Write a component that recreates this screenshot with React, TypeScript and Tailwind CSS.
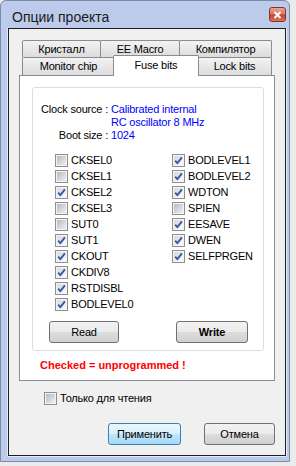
import type { ReactNode } from "react";

type Fuse = { name: string; checked: boolean };

const leftFuses: Fuse[] = [
  { name: "CKSEL0", checked: false },
  { name: "CKSEL1", checked: false },
  { name: "CKSEL2", checked: true },
  { name: "CKSEL3", checked: false },
  { name: "SUT0", checked: false },
  { name: "SUT1", checked: true },
  { name: "CKOUT", checked: true },
  { name: "CKDIV8", checked: true },
  { name: "RSTDISBL", checked: true },
  { name: "BODLEVEL0", checked: true },
];

const rightFuses: Fuse[] = [
  { name: "BODLEVEL1", checked: true },
  { name: "BODLEVEL2", checked: true },
  { name: "WDTON", checked: true },
  { name: "SPIEN", checked: false },
  { name: "EESAVE", checked: true },
  { name: "DWEN", checked: true },
  { name: "SELFPRGEN", checked: true },
];

const tabIdle =
  "flex items-center justify-center rounded-t-[2px] border-x border-t border-[#898c95] bg-[linear-gradient(to_bottom,#f3f3f3,#dcdcdc)]";

function CheckBox({ checked }: { checked: boolean }) {
  return (
    <span className="relative flex h-[13px] w-[13px] shrink-0 border border-[#8f8f8f] bg-[#f4f4f4] p-px">
      <span
        className={
          checked
            ? "h-full w-full bg-[linear-gradient(135deg,#d6d8dc,#fbfbfb)]"
            : "h-full w-full bg-[linear-gradient(135deg,#b7bac0,#efeff0)]"
        }
      />
      {checked && (
        <svg className="absolute left-0 top-0" width="11" height="11" viewBox="0 0 11 11">
          <path d="M2.2 5.6 L4.4 8.1 L8.9 2.4" fill="none" stroke="#3552a3" strokeWidth="1.8" />
        </svg>
      )}
    </span>
  );
}

function FuseRow({ fuse }: { fuse: Fuse }) {
  return (
    <div className="flex h-4 items-center gap-[3px]">
      <CheckBox checked={fuse.checked} />
      <span>{fuse.name}</span>
    </div>
  );
}

function Button({
  children,
  className = "",
  primary = false,
}: {
  children: ReactNode;
  className?: string;
  primary?: boolean;
}) {
  return (
    <button
      type="button"
      className={`flex h-[22px] items-center justify-center rounded-[3px] border ${
        primary
          ? "border-[#3c7fb1] bg-[linear-gradient(to_bottom,#eaf6fd_0%,#d9f0fc_50%,#bee6fd_50%,#a7d9f5_100%)]"
          : "border-[#707070] bg-[linear-gradient(to_bottom,#f2f2f2_0%,#ebebeb_50%,#dddddd_50%,#cfcfcf_100%)]"
      } ${className}`}
    >
      {children}
    </button>
  );
}

export default function App() {
  return (
    <div className="h-[466px] w-[296px] overflow-hidden bg-[#ebebeb] font-['Liberation_Sans',Arial,sans-serif] text-[11px] leading-[13px] tracking-[-0.2px] text-black">
      <div className="flex h-[462px] w-[290px] flex-col rounded-t-[6px] border border-[#7d8aa6] bg-[#bccaeb] pb-[5px] pl-[7px] pr-[3px]">
        {/* title bar */}
        <div className="-ml-[7px] -mr-[3px] flex h-[27px] shrink-0 items-start justify-between pl-[11px] pr-[3px] pt-[6px]">
          <span className="pt-[2px] text-[14px] leading-[16px] tracking-normal text-[#1b1b1b]">Опции проекта</span>
          <span className="flex h-[15px] w-[17px] items-center justify-center rounded-[3px] border border-[#8a3220] bg-[linear-gradient(to_bottom,#eaa596_0%,#d8765f_45%,#c4432a_55%,#d9765a_100%)]">
            <svg width="9" height="8" viewBox="0 0 9 8">
              <path d="M1.5 1 L7.5 7 M7.5 1 L1.5 7" stroke="#ffffff" strokeWidth="2" />
            </svg>
          </span>
        </div>

        {/* client area */}
        <div className="flex flex-1 flex-col border border-[#1e1e1e] bg-[#f0f0f0] shadow-[-1px_0_0_#e4eaf7,1px_0_0_#e4eaf7,0_1px_0_#e4eaf7]">
          <div className="ml-[10px] mt-[11px] w-[256px]">
            {/* tab rows */}
            <div className="flex h-[17px] pl-[3px]">
              <div className={`${tabIdle} h-[17px] w-[79px]`}>Кристалл</div>
              <div className={`${tabIdle} -ml-px h-[17px] w-[80px]`}>EE Macro</div>
              <div className={`${tabIdle} -ml-px h-[17px] w-[93px]`}>Компилятор</div>
            </div>
            <div className="flex h-[18px] items-end pl-[3px]">
              <div className={`${tabIdle} h-[18px] w-[93px]`}>Monitor chip</div>
              <div className="relative z-10 -mb-px -ml-[2px] flex h-[21px] w-[86px] items-start justify-center rounded-t-[2px] border-x border-t border-[#898c95] bg-white pt-[3px]">
                Fuse bits
              </div>
              <div className={`${tabIdle} -ml-[2px] h-[18px] w-[75px]`}>Lock bits</div>
            </div>

            {/* panel */}
            <div className="h-[306px] border border-[#898c95] bg-white">
              <div className="ml-[12px] mt-[11px] flex h-[264px] w-[232px] flex-col rounded-[3px] border border-[#d5dfe5] pb-[7px] pt-[15px]">
                <div className="grid grid-cols-[75px_auto] gap-x-[3px]">
                  <span className="text-right">Clock source :</span>
                  <span className="text-[#0000ff]">Calibrated internal</span>
                  <span />
                  <span className="text-[#0000ff]">RC oscillator 8 MHz</span>
                  <span className="text-right">Boot size :</span>
                  <span className="text-[#0000ff]">1024</span>
                </div>

                <div className="mt-[10px] flex pl-[22px]">
                  <div className="flex w-[117px] flex-col">
                    {leftFuses.map((f) => (
                      <FuseRow key={f.name} fuse={f} />
                    ))}
                  </div>
                  <div className="flex flex-col">
                    {rightFuses.map((f) => (
                      <FuseRow key={f.name} fuse={f} />
                    ))}
                  </div>
                </div>

                <div className="mt-[9px] flex gap-[57px] pl-[16px]">
                  <Button className="w-[70px]">Read</Button>
                  <Button className="w-[72px] font-bold">Write</Button>
                </div>
              </div>
              <div className="ml-[20px] mt-[8px] font-bold tracking-normal text-[#ff0000]">Checked = unprogrammed !</div>
            </div>
          </div>

          <div className="ml-[35px] mt-[10px] flex h-[14px] items-center gap-[3px]">
            <CheckBox checked={false} />
            <span>Только для чтения</span>
          </div>

          <div className="mt-[18px] flex justify-end gap-[23px] pr-[10px]">
            <Button primary className="w-[73px]">
              Применить
            </Button>
            <Button className="w-[71px]">Отмена</Button>
          </div>
        </div>
      </div>
    </div>
  );
}
